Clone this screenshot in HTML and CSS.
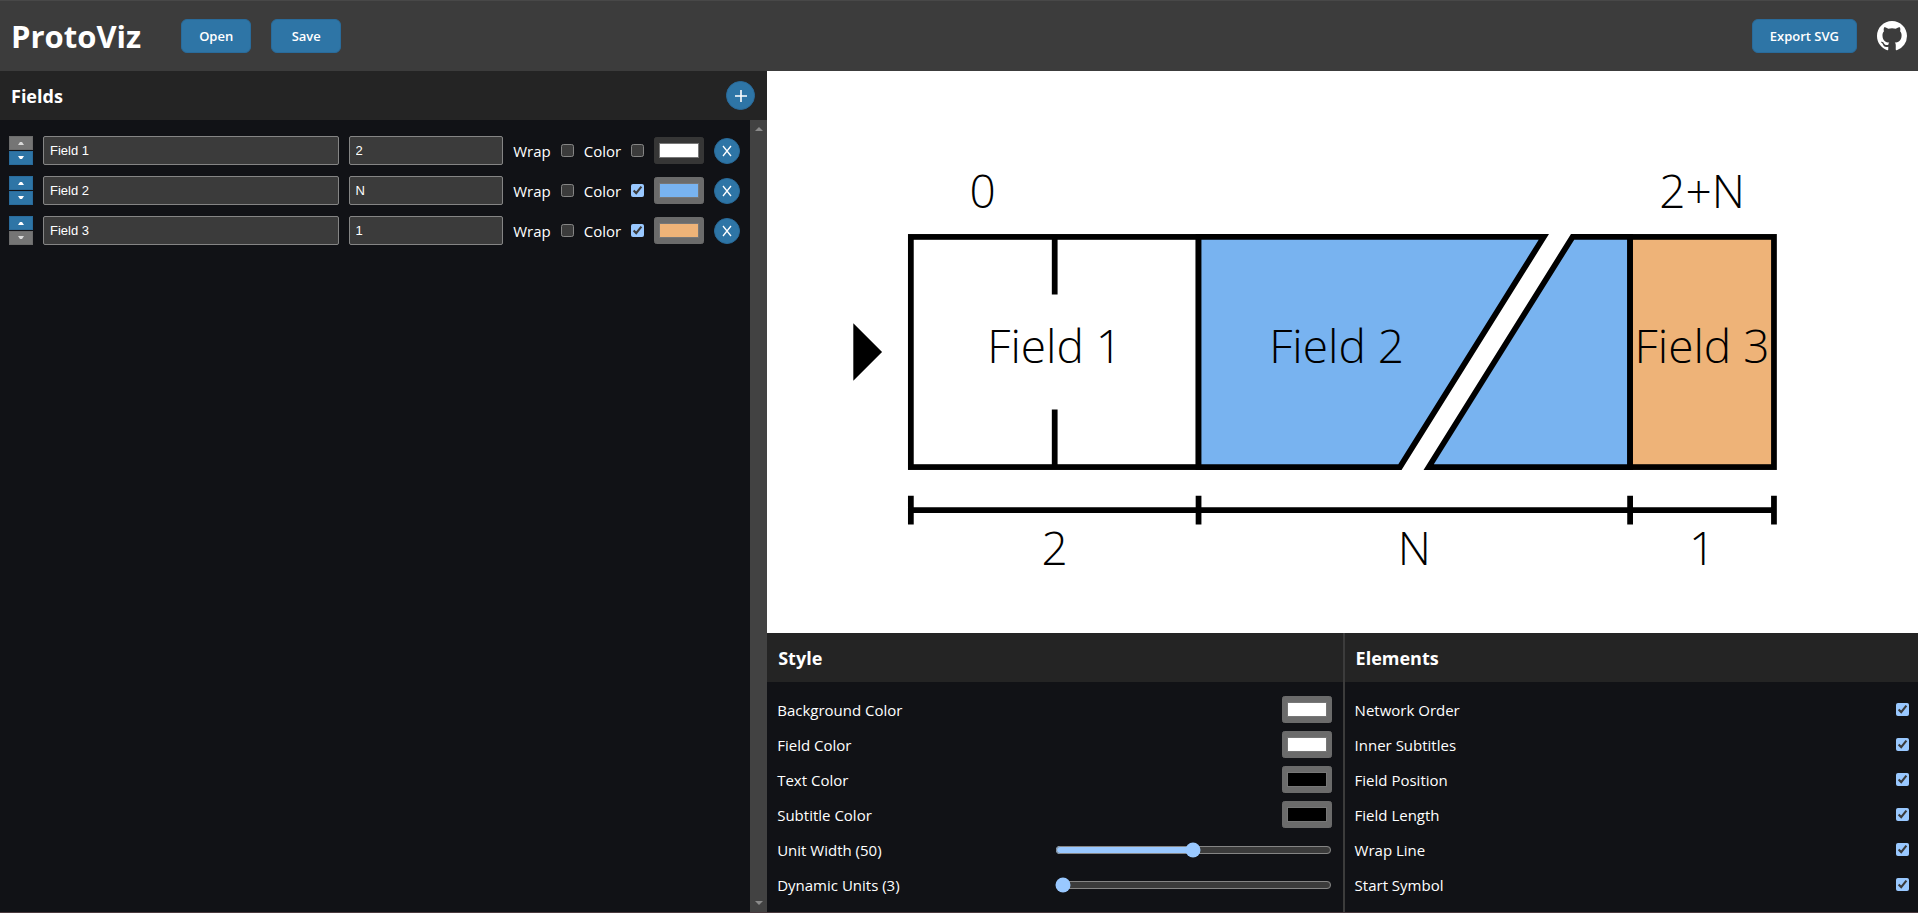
FILE: index.html
```html
<!DOCTYPE html>
<html lang="en">
<head>
<meta charset="utf-8">
<title>ProtoViz</title>
<link rel="stylesheet" href="styles.css">
</head>
<body>
<header class="topbar">
  <h1 class="brand">ProtoViz</h1>
  <button class="btn" type="button">Open</button>
  <button class="btn" type="button">Save</button>
  <button class="btn btn-export" type="button">Export SVG</button>
  <a class="github" href="#" aria-label="GitHub">
    <svg viewBox="0 0 16 16" fill="#fff"><path d="M8 0C3.58 0 0 3.58 0 8c0 3.54 2.29 6.53 5.47 7.59.4.07.55-.17.55-.38 0-.19-.01-.82-.01-1.49-2.01.37-2.53-.49-2.69-.94-.09-.23-.48-.94-.82-1.13-.28-.15-.68-.52-.01-.53.63-.01 1.08.58 1.23.82.72 1.21 1.87.87 2.33.66.07-.52.28-.87.51-1.07-1.78-.2-3.64-.89-3.64-3.95 0-.87.31-1.59.82-2.15-.08-.2-.36-1.02.08-2.12 0 0 .67-.21 2.2.82.64-.18 1.32-.27 2-.27s1.36.09 2 .27c1.53-1.04 2.2-.82 2.2-.82.44 1.1.16 1.92.08 2.12.51.56.82 1.27.82 2.15 0 3.07-1.87 3.75-3.65 3.95.29.25.54.73.54 1.48 0 1.07-.01 1.93-.01 2.2 0 .21.15.46.55.38A8.01 8.01 0 0 0 16 8c0-4.42-3.58-8-8-8z"/></svg>
  </a>
</header>
<main class="workspace">
  <section class="fields">
    <div class="panel-head">
      <h2 class="panel-title">Fields</h2>
      <button class="round round-add" type="button" aria-label="Add field"><svg viewBox="0 0 14 14"><path d="M7 1v12M1 7h12"/></svg></button>
    </div>
    <div class="fields-body">
      <div class="field-list">
        <div class="field-row">
          <div class="movers">
            <button class="mover" type="button" aria-label="Move up" disabled><svg viewBox="0 0 6 4"><path d="M0 4L2 1h2l2 3z"/></svg></button>
            <button class="mover" type="button" aria-label="Move down"><svg viewBox="0 0 6 4"><path d="M0 0L2 3h2l2-3z"/></svg></button>
          </div>
          <input class="text name" type="text" value="Field 1" aria-label="Name">
          <input class="text size" type="text" value="2" aria-label="Length">
          <label class="check-label" for="wrap1">Wrap</label><input class="check" id="wrap1" type="checkbox">
          <label class="check-label" for="color1">Color</label><input class="check" id="color1" type="checkbox">
          <input class="color" type="color" value="#ffffff" aria-label="Field color" disabled>
          <button class="round" type="button" aria-label="Remove field"><svg viewBox="0 0 14 14"><path d="M3 2l8 10M11 2L3 12"/></svg></button>
        </div>
        <div class="field-row">
          <div class="movers">
            <button class="mover" type="button" aria-label="Move up"><svg viewBox="0 0 6 4"><path d="M0 4L2 1h2l2 3z"/></svg></button>
            <button class="mover" type="button" aria-label="Move down"><svg viewBox="0 0 6 4"><path d="M0 0L2 3h2l2-3z"/></svg></button>
          </div>
          <input class="text name" type="text" value="Field 2" aria-label="Name">
          <input class="text size" type="text" value="N" aria-label="Length">
          <label class="check-label" for="wrap2">Wrap</label><input class="check" id="wrap2" type="checkbox">
          <label class="check-label" for="color2">Color</label><input class="check" id="color2" type="checkbox" checked>
          <input class="color" type="color" value="#78b3f0" aria-label="Field color">
          <button class="round" type="button" aria-label="Remove field"><svg viewBox="0 0 14 14"><path d="M3 2l8 10M11 2L3 12"/></svg></button>
        </div>
        <div class="field-row">
          <div class="movers">
            <button class="mover" type="button" aria-label="Move up"><svg viewBox="0 0 6 4"><path d="M0 4L2 1h2l2 3z"/></svg></button>
            <button class="mover" type="button" aria-label="Move down" disabled><svg viewBox="0 0 6 4"><path d="M0 0L2 3h2l2-3z"/></svg></button>
          </div>
          <input class="text name" type="text" value="Field 3" aria-label="Name">
          <input class="text size" type="text" value="1" aria-label="Length">
          <label class="check-label" for="wrap3">Wrap</label><input class="check" id="wrap3" type="checkbox">
          <label class="check-label" for="color3">Color</label><input class="check" id="color3" type="checkbox" checked>
          <input class="color" type="color" value="#eeb378" aria-label="Field color">
          <button class="round" type="button" aria-label="Remove field"><svg viewBox="0 0 14 14"><path d="M3 2l8 10M11 2L3 12"/></svg></button>
        </div>
      </div>
      <div class="scroll-track" aria-hidden="true">
        <svg class="scroll-arrow" viewBox="0 0 8 4"><path d="M0 4l4-4 4 4z"/></svg>
        <svg class="scroll-arrow" viewBox="0 0 8 4"><path d="M0 0l4 4 4-4z"/></svg>
      </div>
    </div>
  </section>
  <section class="output">
    <div class="canvas">
      <svg class="diagram" viewBox="0 0 400 190">
        <path class="ink" d="M30 85l10 10-10 10z"/>
        <rect class="box plain" x="50" y="55" width="100" height="80"/>
        <path class="box" d="M100 55v20M100 115v20"/>
        <path class="box blue" d="M150 55H270L220 135H150z"/>
        <path class="box blue" d="M280 55H300V135H230z"/>
        <rect class="box orange" x="300" y="55" width="50" height="80"/>
        <path class="box" d="M50 150H350M50 145v10M150 145v10M300 145v10M350 145v10"/>
        <g class="caption">
          <text x="75" y="45">0</text>
          <text x="325" y="45">2+N</text>
          <text x="100" y="99">Field 1</text>
          <text x="198" y="99">Field 2</text>
          <text x="325" y="99">Field 3</text>
          <text x="100" y="169">2</text>
          <text x="225" y="169">N</text>
          <text x="325" y="169">1</text>
        </g>
      </svg>
    </div>
    <div class="settings">
      <section class="panel">
        <div class="panel-head"><h2 class="panel-title">Style</h2></div>
        <div class="options">
          <div class="option"><label for="bg">Background Color</label><input class="color" id="bg" type="color" value="#ffffff"></div>
          <div class="option"><label for="fc">Field Color</label><input class="color" id="fc" type="color" value="#ffffff"></div>
          <div class="option"><label for="tc">Text Color</label><input class="color" id="tc" type="color" value="#000000"></div>
          <div class="option"><label for="sc">Subtitle Color</label><input class="color" id="sc" type="color" value="#000000"></div>
          <div class="option"><label for="uw">Unit Width (50)</label><input class="slider" id="uw" type="range" min="0" max="100" value="50"></div>
          <div class="option"><label for="du">Dynamic Units (3)</label><input class="slider" id="du" type="range" min="3" max="20" value="3"></div>
        </div>
      </section>
      <section class="panel panel-elements">
        <div class="panel-head"><h2 class="panel-title">Elements</h2></div>
        <div class="options">
          <div class="option"><label for="e1">Network Order</label><input class="check" id="e1" type="checkbox" checked></div>
          <div class="option"><label for="e2">Inner Subtitles</label><input class="check" id="e2" type="checkbox" checked></div>
          <div class="option"><label for="e3">Field Position</label><input class="check" id="e3" type="checkbox" checked></div>
          <div class="option"><label for="e4">Field Length</label><input class="check" id="e4" type="checkbox" checked></div>
          <div class="option"><label for="e5">Wrap Line</label><input class="check" id="e5" type="checkbox" checked></div>
          <div class="option"><label for="e6">Start Symbol</label><input class="check" id="e6" type="checkbox" checked></div>
        </div>
      </section>
    </div>
  </section>
</main>
</body>
</html>
```
FILE: styles.css
```css
:root {
  color-scheme: dark;
}

* {
  box-sizing: border-box;
}

body {
  margin: 0;
  height: 100vh;
  display: flex;
  flex-direction: column;
  border-bottom: 1px solid #4a3a3e;
  background: #111216;
  color: #fff;
  font: 15px/20px "Open Sans", "Noto Sans", sans-serif;
}

.topbar {
  display: flex;
  align-items: center;
  gap: 20px;
  padding: 17px 11px;
  border-top: 1px solid #484848;
  background: #3c3c3c;
}

.brand {
  margin: 0 20px 0 0;
  font-size: 31px;
  line-height: 36px;
  font-weight: 700;
}

.btn {
  min-width: 70px;
  height: 34px;
  padding: 0 17px;
  border: 1px solid #296b9b;
  border-radius: 6px;
  background: #2e75a6;
  color: #fff;
  font: 600 13px/20px "Open Sans", "Noto Sans", sans-serif;
}

.btn-export {
  margin-left: auto;
}

.github {
  display: flex;
}

.github svg {
  width: 30px;
  height: 30px;
}

.workspace {
  flex: 1;
  min-height: 0;
  display: grid;
  grid-template-columns: 2fr 3fr;
}

.fields,
.output {
  min-width: 0;
  min-height: 0;
  display: flex;
  flex-direction: column;
}

.panel-head {
  display: flex;
  align-items: center;
  justify-content: space-between;
  height: 49px;
  padding: 0 12px 0 11px;
  background: #242424;
}

.panel-title {
  margin: 0;
  font-size: 18px;
  line-height: 24px;
  font-weight: 700;
}

.fields-body {
  flex: 1;
  display: flex;
}

.field-list {
  flex: 1;
  min-width: 0;
  display: flex;
  flex-direction: column;
  gap: 11px;
  padding: 16px 10px 16px 9px;
}

.field-row {
  display: flex;
  align-items: center;
  gap: 10px;
}

.movers {
  display: flex;
  flex-direction: column;
  gap: 1px;
}

.mover {
  display: flex;
  align-items: center;
  justify-content: center;
  width: 24px;
  height: 14px;
  padding: 0;
  border: 1px solid #296b9b;
  background: #2e75a6;
}

.mover:disabled {
  border-color: #6c6c6c;
  background: #757575;
}

.mover svg {
  width: 6px;
  height: 4px;
  fill: #fff;
}

.mover:disabled svg {
  fill: #d8d8d8;
}

.text {
  min-width: 0;
  height: 29px;
  padding: 0 6px;
  border: 1px solid #858585;
  border-radius: 2px;
  background: #3b3b3b;
  color: #fff;
  font: 13px/20px "Liberation Sans", sans-serif;
}

.name {
  flex: 2;
}

.size {
  flex: 1;
}

.check {
  width: 13px;
  height: 13px;
  margin: 0;
}

.color {
  width: 50px;
  height: 27px;
}

.round {
  display: flex;
  align-items: center;
  justify-content: center;
  width: 26px;
  height: 26px;
  padding: 0;
  border: 1px solid #296b9b;
  border-radius: 50%;
  background: #2e75a6;
}

.round svg {
  width: 14px;
  height: 14px;
  fill: none;
  stroke: #fff;
  stroke-width: 1.3;
}

.round-add {
  width: 29px;
  height: 29px;
}

.round-add svg {
  stroke-width: 1.6;
}

.scroll-track {
  display: flex;
  flex-direction: column;
  align-items: center;
  justify-content: space-between;
  width: 17px;
  padding: 7px 0;
  background: #424242;
}

.scroll-arrow {
  width: 8px;
  height: 4px;
  fill: #8a8a8a;
}

.canvas {
  flex: 1;
  min-height: 0;
  display: flex;
  background: #fff;
}

.diagram {
  width: 100%;
  height: 100%;
}

.ink {
  fill: #000;
}

.box {
  stroke: #000;
  stroke-width: 2;
}

.plain {
  fill: #fff;
}

.blue {
  fill: #78b3f0;
}

.orange {
  fill: #eeb378;
}

.caption {
  fill: #000;
  font: 350 16px "Open Sans", "Noto Sans", sans-serif;
  text-anchor: middle;
}

.settings {
  display: grid;
  grid-template-columns: 1fr 1fr;
}

.panel-elements {
  border-left: 2px solid #3c3c3c;
}

.options {
  padding: 10px 9px 10px 10px;
}

.option {
  display: flex;
  align-items: center;
  justify-content: space-between;
  height: 35px;
}

.option .color {
  margin-right: 2px;
}

.slider {
  width: calc(50% - 2px);
  margin: 2px;
}
```
